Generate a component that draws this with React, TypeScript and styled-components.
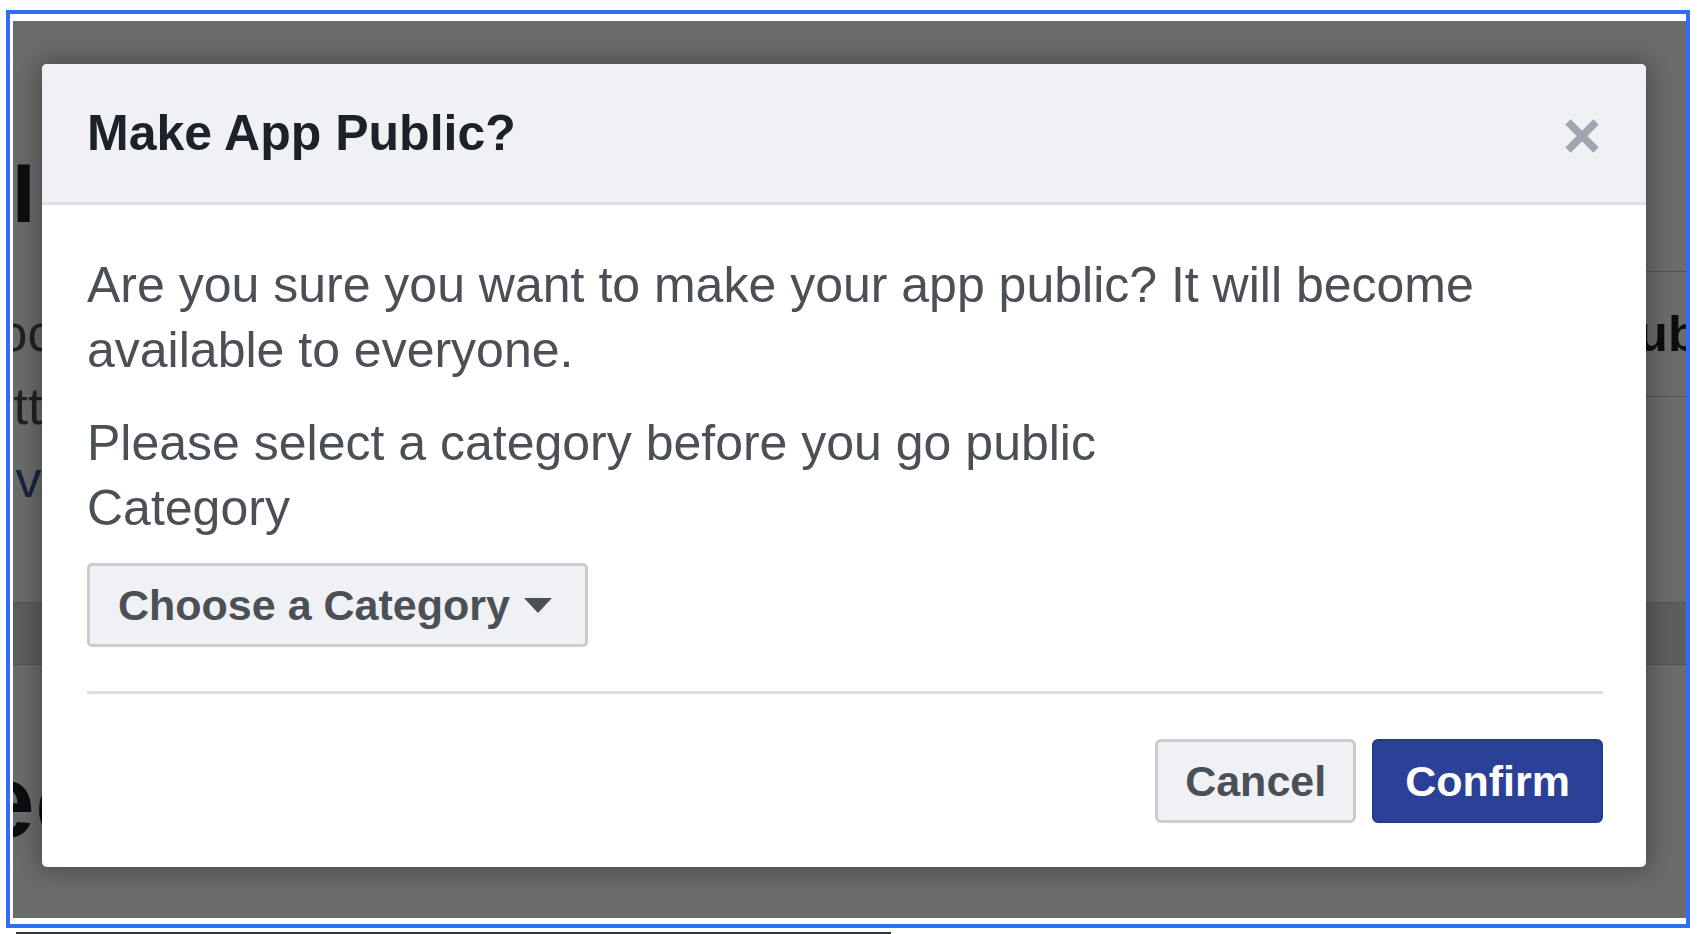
import React from "react";
import styled, { createGlobalStyle } from "styled-components";

const GlobalStyle = createGlobalStyle`
  html, body {
    margin: 0;
    padding: 0;
    background: #ffffff;
    width: 1704px;
    height: 934px;
    overflow: hidden;
  }
  body {
    font-family: "Liberation Sans", Arial, Helvetica, sans-serif;
  }
  *, *::before, *::after {
    box-sizing: border-box;
  }
`;

/* ---------- outer screenshot frame ---------- */

const Screen = styled.div`
  display: flex;
  flex-direction: column;
  padding: 10px 0 0 6px;
`;

const Frame = styled.div`
  width: 1684px;
  height: 918px;
  border: 4px solid #2f6ef5;
  padding: 7px 0 6px 3px;
`;

const Stage = styled.div`
  position: relative;
  width: 1673px;
  height: 897px;
  overflow: hidden;
  background: #ffffff;
`;

const BottomRule = styled.div`
  margin: 4px 0 0 10px;
  width: 875px;
  height: 2px;
  background: #2e333d;
`;

/* ---------- page behind the overlay ---------- */

const BackgroundPage = styled.div`
  display: grid;
  grid-template-columns: 1fr 82px;
  grid-template-rows: 581px 63px auto;
  height: 100%;
  color: #1d2129;
`;

const LeftColumn = styled.div`
  display: flex;
  flex-direction: column;
  align-items: flex-start;
  padding-top: 130px;
  min-width: 0;
  overflow: hidden;
`;

const PageHeading = styled.div`
  margin-left: -1px;
  font-size: 84px;
  line-height: 84px;
  font-weight: 700;
  white-space: nowrap;
`;

const NavList = styled.div`
  display: flex;
  flex-direction: column;
  margin-top: 62px;
`;

const NavItem = styled.div<{ $shift: number; $link?: boolean }>`
  margin-left: ${(p) => p.$shift}px;
  font-size: 52px;
  line-height: 73px;
  color: ${(p) => (p.$link ? "#385898" : "#4b4f56")};
  white-space: nowrap;
`;

const RightColumn = styled.div`
  display: flex;
  flex-direction: column;
  padding-top: 250px;
  min-width: 0;
  overflow: hidden;
`;

const TableRow = styled.div`
  display: flex;
  align-items: center;
  height: 126px;
  border-top: 1px solid #c4c7cc;
  border-bottom: 1px solid #c4c7cc;
  font-size: 50px;
  font-weight: 700;
  white-space: nowrap;
`;

const Band = styled.div`
  grid-column: 1 / -1;
  background: #dddfe2;
  border-top: 1px solid #c4c7cc;
  border-bottom: 1px solid #c4c7cc;
`;

const SectionHeading = styled.div`
  grid-column: 1 / -1;
  margin: 84px 0 0 -111px;
  font-size: 104px;
  line-height: 104px;
  font-weight: 700;
  white-space: nowrap;
`;

/* ---------- overlay + dialog ---------- */

const Overlay = styled.div`
  position: absolute;
  inset: 0;
  display: flex;
  align-items: flex-start;
  padding: 43px 0 0 29px;
  background: rgba(0, 0, 0, 0.58);
`;

const Dialog = styled.div`
  display: flex;
  flex-direction: column;
  width: 1604px;
  background: #ffffff;
  border-radius: 5px;
  overflow: hidden;
  box-shadow: 0 0 24px 4px rgba(0, 0, 0, 0.3);
`;

const Header = styled.div`
  display: flex;
  align-items: center;
  justify-content: space-between;
  height: 141px;
  padding: 0 45px 0 45px;
  background: #f0f1f5;
  border-bottom: 3px solid #dfe0e4;
`;

const Title = styled.h2`
  margin: 0;
  font-size: 50px;
  line-height: 58px;
  font-weight: 700;
  color: #1d2129;
`;

const CloseButton = styled.button`
  display: flex;
  width: 38px;
  height: 38px;
  margin-top: 5px;
  padding: 0;
  border: none;
  background: transparent;
  cursor: pointer;
`;

const Body = styled.div`
  display: flex;
  flex-direction: column;
  align-items: stretch;
  padding: 48px 43px 0 45px;
`;

const Paragraph = styled.p<{ $gap?: number }>`
  margin: ${(p) => p.$gap ?? 0}px 0 0;
  font-size: 50px;
  line-height: 65px;
  color: #4b4f56;
`;

const FieldLabel = styled.label`
  display: block;
  font-size: 50px;
  line-height: 65px;
  color: #4b4f56;
`;

const SelectButton = styled.button`
  display: inline-flex;
  align-items: center;
  align-self: flex-start;
  gap: 14px;
  height: 84px;
  margin-top: 22px;
  padding: 0 33px 0 28px;
  border: 3px solid #c9ccd1;
  border-radius: 5px;
  background: #f0f1f5;
  font-family: inherit;
  font-size: 43px;
  font-weight: 700;
  color: #4b4f56;
  cursor: pointer;
`;

const Divider = styled.hr`
  margin: 44px 0 0;
  height: 3px;
  border: none;
  background: #dadde1;
`;

const Footer = styled.div`
  display: flex;
  justify-content: flex-end;
  gap: 16px;
  padding: 45px 0 44px;
`;

const ActionButton = styled.button<{ $primary?: boolean }>`
  display: inline-flex;
  align-items: center;
  justify-content: center;
  height: 84px;
  padding: ${(p) => (p.$primary ? "0 31px" : "0 27px")};
  border: ${(p) => (p.$primary ? "2px solid #25398b" : "3px solid #c9ccd1")};
  border-radius: 6px;
  background: ${(p) => (p.$primary ? "#2a4197" : "#f0f1f5")};
  font-family: inherit;
  font-size: 43px;
  font-weight: 700;
  color: ${(p) => (p.$primary ? "#ffffff" : "#4b4f56")};
  cursor: pointer;
`;

const CloseIcon = () => (
  <svg width="38" height="38" viewBox="0 0 38 38" aria-hidden="true">
    <path d="M5 5 L33 33 M33 5 L5 33" stroke="#a0a5b0" strokeWidth="7.5" strokeLinecap="butt" />
  </svg>
);

const Caret = () => (
  <svg width="28" height="15" viewBox="0 0 28 15" aria-hidden="true">
    <path d="M0 0 H28 L14 15 Z" fill="#4b4f56" />
  </svg>
);

export default function App() {
  return (
    <>
      <GlobalStyle />
      <Screen>
        <Frame>
          <Stage>
            <BackgroundPage>
              <LeftColumn>
                <PageHeading>I</PageHeading>
                <NavList>
                  <NavItem $shift={-52}>Docs</NavItem>
                  <NavItem $shift={-63}>Settings</NavItem>
                  <NavItem $shift={-64} $link>
                    Review
                  </NavItem>
                </NavList>
              </LeftColumn>
              <RightColumn>
                <TableRow>Public</TableRow>
              </RightColumn>
              <Band />
              <SectionHeading>Recent</SectionHeading>
            </BackgroundPage>

            <Overlay>
              <Dialog role="dialog" aria-labelledby="dlg-title">
                <Header>
                  <Title id="dlg-title">Make App Public?</Title>
                  <CloseButton aria-label="Close">
                    <CloseIcon />
                  </CloseButton>
                </Header>
                <Body>
                  <Paragraph>
                    Are you sure you want to make your app public? It will become available to everyone.
                  </Paragraph>
                  <Paragraph $gap={28}>Please select a category before you go public</Paragraph>
                  <FieldLabel>Category</FieldLabel>
                  <SelectButton>
                    Choose a Category
                    <Caret />
                  </SelectButton>
                  <Divider />
                  <Footer>
                    <ActionButton>Cancel</ActionButton>
                    <ActionButton $primary>Confirm</ActionButton>
                  </Footer>
                </Body>
              </Dialog>
            </Overlay>
          </Stage>
        </Frame>
        <BottomRule />
      </Screen>
    </>
  );
}
